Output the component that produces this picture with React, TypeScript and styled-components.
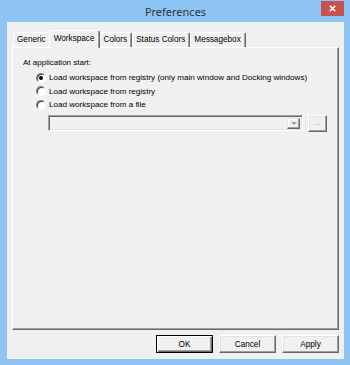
import React from "react";
import styled, { createGlobalStyle } from "styled-components";

const Global = createGlobalStyle`
  html, body { margin: 0; padding: 0; background: #8dc4f4; }
  body { font-family: "Liberation Sans", Arial, sans-serif; }
  * { box-sizing: border-box; }
`;

const Window = styled.div`
  width: 350px;
  height: 365px;
  background: #8dc4f4;
  display: flex;
  flex-direction: column;
  padding: 0 6px 6px 7px;
`;

const TitleBar = styled.div`
  height: 22px;
  display: grid;
  grid-template-columns: 1fr auto 1fr;
  align-items: start;
`;

const Title = styled.div`
  grid-column: 2;
  font-family: "Segoe UI", "Noto Sans", "Liberation Sans", sans-serif;
  font-size: 11px;
  line-height: 14px;
  margin-top: 5px;
  color: #2f3438;
`;

const CloseButton = styled.div`
  grid-column: 3;
  justify-self: end;
  width: 23px;
  height: 15px;
  margin-top: 1px;
  background: #c75050;
  display: flex;
  align-items: center;
  justify-content: center;
`;

const Client = styled.div`
  flex: 1;
  background: #f0f0f0;
  display: flex;
  flex-direction: column;
  padding: 8px 5px 6px 5px;
`;

const TabRow = styled.div`
  display: flex;
  align-items: flex-end;
  height: 17px;
  padding-left: 1px;
  position: relative;
  z-index: 1;
`;

const Tab = styled.div<{ $active?: boolean }>`
  font-size: 8.2px;
  line-height: 12px;
  color: #000;
  background: #f0f0f0;
  border-top: 1px solid #fff;
  border-left: 1px solid #fff;
  border-right: 1px solid #696969;
  box-shadow: inset -1px 0 0 #a0a0a0;
  border-radius: 2px 2px 0 0;
  white-space: nowrap;
  height: ${(p) => (p.$active ? "18px" : "15px")};
  padding: ${(p) => (p.$active ? "2px 5px 0 4px" : "1px 4px 0 3px")};
  margin: ${(p) => (p.$active ? "0 -1px -1px -2px" : "0")};
  position: relative;
  z-index: ${(p) => (p.$active ? 2 : 1)};
`;

const Panel = styled.div`
  flex: 1;
  border-top: 1px solid #fff;
  border-left: 1px solid #fff;
  border-right: 1px solid #696969;
  border-bottom: 1px solid #696969;
  box-shadow: inset -1px -1px 0 #a0a0a0;
  padding: 10px 10px 0 10px;
  display: flex;
  flex-direction: column;
`;

const Label = styled.div`
  font-size: 8px;
  line-height: 10px;
  color: #000;
  height: 10px;
`;

const Options = styled.div`
  display: flex;
  flex-direction: column;
  padding-left: 12px;
  margin-top: 3px;
`;

const OptionRow = styled.div`
  display: flex;
  align-items: center;
  height: 13.5px;
  gap: 3px;
  font-size: 8.1px;
  color: #000;
  white-space: nowrap;
`;

const Radio = styled.span<{ $checked?: boolean }>`
  width: 10px;
  height: 10px;
  margin-left: 1px;
  border-radius: 50%;
  border: 1px solid;
  border-color: #808080 #fff #fff #808080;
  background: #fff;
  box-shadow: inset 1px 1px 0 #404040;
  display: flex;
  align-items: center;
  justify-content: center;
  flex: none;
  &::after {
    content: "";
    width: 4px;
    height: 4px;
    border-radius: 50%;
    background: ${(p) => (p.$checked ? "#000" : "transparent")};
  }
`;

const FileRow = styled.div`
  display: flex;
  align-items: flex-start;
  gap: 5px;
  margin-top: 3px;
  padding-left: 25px;
`;

const Combo = styled.div`
  width: 255px;
  height: 16px;
  border-top: 1px solid #a0a0a0;
  border-left: 1px solid #a0a0a0;
  border-right: 1px solid #fff;
  border-bottom: 1px solid #fff;
  box-shadow: inset 1px 1px 0 #696969, inset -1px -1px 0 #e3e3e3;
  background: #f0f0f0;
  display: flex;
  justify-content: flex-end;
  padding: 2px 2px 1px 2px;
`;

const ComboArrow = styled.div`
  width: 13px;
  height: 11px;
  border-top: 1px solid #e3e3e3;
  border-left: 1px solid #e3e3e3;
  border-right: 1px solid #696969;
  border-bottom: 1px solid #696969;
  box-shadow: inset -1px -1px 0 #a0a0a0, inset 1px 1px 0 #fff;
  display: flex;
  align-items: center;
  justify-content: center;
  &::after {
    content: "";
    border-left: 3px solid transparent;
    border-right: 3px solid transparent;
    border-top: 3px solid #a0a0a0;
  }
`;

const SmallButton = styled.div`
  width: 19px;
  height: 17px;
  border-top: 1px solid #fff;
  border-left: 1px solid #fff;
  border-right: 1px solid #696969;
  border-bottom: 1px solid #696969;
  box-shadow: inset -1px -1px 0 #a0a0a0, inset 1px 1px 0 #e3e3e3;
  font-size: 8px;
  color: #a0a0a0;
  display: flex;
  align-items: center;
  justify-content: center;
  line-height: 1;
`;

const ButtonBar = styled.div`
  display: flex;
  justify-content: flex-end;
  gap: 6px;
  margin-top: 5px;
`;

const Button = styled.div<{ $default?: boolean }>`
  width: 57px;
  height: 18px;
  font-size: 8.2px;
  color: #000;
  display: flex;
  align-items: center;
  justify-content: center;
  background: #f0f0f0;
  border: 1px solid;
  border-color: ${(p) =>
    p.$default ? "#000" : "#fff #696969 #696969 #fff"};
  box-shadow: ${(p) =>
    p.$default
      ? "inset 1px 1px 0 #fff, inset -1px -1px 0 #696969, inset -2px -2px 0 #a0a0a0"
      : "inset -1px -1px 0 #a0a0a0, inset 1px 1px 0 #e3e3e3"};
`;

export default function App() {
  return (
    <>
      <Global />
      <Window>
        <TitleBar>
          <Title>Preferences</Title>
          <CloseButton>
            <svg width="7" height="7" viewBox="0 0 7 7">
              <path d="M0.8 0.8 L6.2 6.2 M6.2 0.8 L0.8 6.2" stroke="#fff" strokeWidth="1.6" />
            </svg>
          </CloseButton>
        </TitleBar>
        <Client>
          <TabRow>
            <Tab>Generic</Tab>
            <Tab $active>Workspace</Tab>
            <Tab>Colors</Tab>
            <Tab>Status Colors</Tab>
            <Tab>Messagebox</Tab>
          </TabRow>
          <Panel>
            <Label>At application start:</Label>
            <Options>
              <OptionRow>
                <Radio $checked />
                Load workspace from registry (only main window and Docking windows)
              </OptionRow>
              <OptionRow>
                <Radio />
                Load workspace from registry
              </OptionRow>
              <OptionRow>
                <Radio />
                Load workspace from a file
              </OptionRow>
            </Options>
            <FileRow>
              <Combo>
                <ComboArrow />
              </Combo>
              <SmallButton>...</SmallButton>
            </FileRow>
          </Panel>
          <ButtonBar>
            <Button $default>OK</Button>
            <Button>Cancel</Button>
            <Button>Apply</Button>
          </ButtonBar>
        </Client>
      </Window>
    </>
  );
}
